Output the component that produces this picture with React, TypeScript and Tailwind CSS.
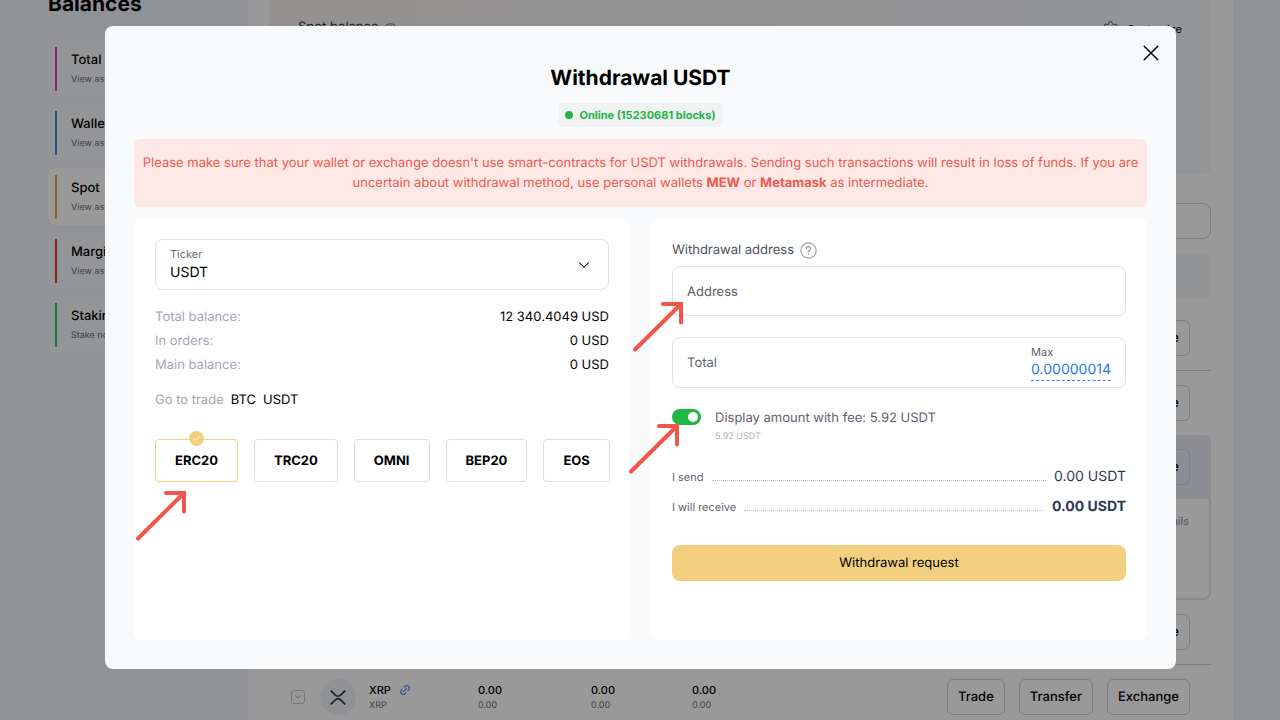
import { useState } from "react";
import { Check, ChevronDown, Eye, Link2, Settings } from "lucide-react";

const accounts = [
  { name: "Total", note: "View assets", stripe: "bg-[#e03ad0]" },
  { name: "Wallet", note: "View assets", stripe: "bg-[#2f8bef]" },
  { name: "Spot", note: "View assets", stripe: "bg-[#f59a45]" },
  { name: "Margin", note: "View assets", stripe: "bg-[#e5302f]" },
  { name: "Staking", note: "Stake now", stripe: "bg-[#1fc16b]" },
];

const networks = ["ERC20", "TRC20", "OMNI", "BEP20", "EOS"];

const balances = [
  { label: "Total balance:", value: "12 340.4049 USD" },
  { label: "In orders:", value: "0 USD" },
  { label: "Main balance:", value: "0 USD" },
];

function Arrow({ className }: { className: string }) {
  return (
    <svg
      aria-hidden="true"
      viewBox="0 0 50 50"
      className={`pointer-events-none absolute z-10 size-[50px] ${className}`}
      fill="none"
      stroke="#f2554a"
      strokeWidth="4"
      strokeLinecap="round"
      strokeLinejoin="miter"
    >
      <path d="M2 47.5 47 3" />
      <path d="M30 2H48V20.5" />
    </svg>
  );
}

function CoinRow({ symbol, tone }: { symbol: string; tone: "line" | "plain" | "active" }) {
  const cell =
    tone === "line"
      ? "h-[65px] border-b border-[#d2d2da] p-0"
      : tone === "active"
        ? "h-[64px] bg-[#eaecf4] p-0 first:rounded-tl-md last:rounded-tr-md"
        : "h-[64px] p-0";
  const action =
    "h-[36px] rounded-md border border-[#d0d0da] px-[10px] pt-[2px] text-[13px] font-medium text-black";
  return (
    <tr>
      <td className={`${cell} w-[209px]`}>
        <div className="flex items-center pl-[22px]">
          <span className="flex size-[14px] items-center justify-center rounded-[3px] border border-[#c5c5d6] text-[#8f8fa6]">
            <ChevronDown size={10} />
          </span>
          <span className="ml-[15px] flex size-[36px] items-center justify-center rounded-full bg-[#f0f2f9]">
            <svg viewBox="0 0 16 15" className="h-[15px] w-[16px]" fill="none" stroke="#23292f" strokeWidth="1.7">
              <path d="M.8.7 5.2 5a4 4 0 0 0 5.6 0L15.2.7" />
              <path d="M.8 14.3 5.2 10a4 4 0 0 1 5.6 0l4.4 4.3" />
            </svg>
          </span>
          <div className="ml-[13px] pt-[2px]">
            <div className="flex items-center gap-[8px] text-[11px] leading-4 font-medium text-black">
              {symbol}
              <Link2 size={12} className="-rotate-45 text-[#2672e0]" />
            </div>
            <div className="text-[9px] leading-4 text-[#70707c]">{symbol}</div>
          </div>
        </div>
      </td>
      {["w-[113px]", "w-[101px]", "w-[160px]"].map((width) => (
        <td key={width} className={`${cell} ${width}`}>
          <div className="pt-[2px] text-[11px] leading-4 font-medium text-black">0.00</div>
          <div className="text-[9px] leading-4 text-[#70707c]">0.00</div>
        </td>
      ))}
      <td className={cell}>
        <div className="flex justify-end gap-[14px] pr-[21px]">
          <button type="button" className={action}>Trade</button>
          <button type="button" className={action}>Transfer</button>
          <button type="button" className={action}>Exchange</button>
        </div>
      </td>
    </tr>
  );
}

function BalancesPage() {
  return (
    <div className="flex h-full overflow-hidden bg-[#f1f3f9]">
      <aside className="w-[248px] shrink-0 pl-[48px]">
        <h1 className="-mt-[10px] text-[21px] leading-[30px] font-bold text-black">Balances</h1>
        <ul className="mt-[20px] flex flex-col gap-[7px]">
          {accounts.map((a) => (
            <li key={a.name} className="flex h-[57px] items-center rounded-lg bg-[#f7f8fc] pl-[7px] nth-[3]:bg-white">
              <span className={`h-[44px] w-[2px] ${a.stripe}`} />
              <div className="ml-[14px] pt-[2px]">
                <div className="text-[13px] leading-5 font-medium text-black">{a.name}</div>
                <div className="text-[9px] leading-5 text-[#6c6c78]">{a.note}</div>
              </div>
            </li>
          ))}
        </ul>
      </aside>
      <main className="mr-[47px] grow bg-white pr-[22px] pl-[21px]">
        <section className="flex h-[174px] items-start justify-between rounded-b-lg bg-linear-to-r from-[#f6f1ef] to-[#f6f8fc] px-[29px] pt-[17px] text-[13px] leading-5">
          <h2 className="flex items-center gap-[5px] text-[#2f3444]">
            Spot balance
            <Eye size={13} className="text-[#70708c]" />
          </h2>
          <button type="button" className="flex items-center gap-[8px] text-[11px] text-black">
            <Settings size={17} strokeWidth={1.5} className="text-[#70708c]" />
            <span className="pt-[2px]">Customize</span>
          </button>
        </section>
        <input aria-label="Search" className="mt-[29px] block h-[36px] w-full rounded-lg border border-[#cfcfd8]" />
        <div className="mt-[14px] h-[45px] rounded-lg bg-[#f6f7fb]" />
        <table className="mt-[8px] w-full table-fixed border-separate border-spacing-0 text-left">
          <tbody>
            <CoinRow symbol="BTC" tone="line" />
            <CoinRow symbol="ETH" tone="plain" />
            <CoinRow symbol="USDT" tone="active" />
            <tr>
              <td colSpan={5} className="h-[101px] rounded-b-lg border-r-2 border-b-2 border-[#e4e4f0] p-0 pt-[12px] pr-[20px] text-right align-top text-[11px] leading-5 text-[#8f8f9f]">
                Details
              </td>
            </tr>
            <CoinRow symbol="LTC" tone="line" />
            <CoinRow symbol="XRP" tone="plain" />
          </tbody>
        </table>
      </main>
    </div>
  );
}

export default function App() {
  const [network, setNetwork] = useState("ERC20");
  const [withFee, setWithFee] = useState(true);

  return (
    <div className="relative h-screen overflow-hidden font-['Inter',sans-serif] [text-rendering:geometricPrecision] **:[text-rendering:inherit]">
      <BalancesPage />
      <div className="absolute inset-0 overflow-hidden bg-black/40 pt-[26px] pr-[104px] pl-[105px]">
        <div
          role="dialog"
          aria-modal="true"
          aria-labelledby="dialog-title"
          className="relative rounded-lg bg-[#f9fafc] px-[29px] pt-[39px] pb-[29px]"
        >
          <button type="button" aria-label="Close" className="absolute top-[19px] right-[17px] text-black">
            <svg viewBox="0 0 16 16" className="size-[16px]" fill="none" stroke="currentColor" strokeWidth="1.4" strokeLinecap="round">
              <path d="M1.2 1.2 14.8 14.8M14.8 1.2 1.2 14.8" />
            </svg>
          </button>
          <h2 id="dialog-title" className="text-center text-[21px] leading-[28px] font-bold text-black">
            Withdrawal USDT
          </h2>
          <div className="mt-[10px] flex justify-center">
            <span className="flex h-[24px] items-center gap-[6px] rounded bg-[#f1f2f4] px-[7px] text-[11px] font-bold text-[#22b544]">
              <span className="size-[8px] rounded-full bg-[#22b544]" />
              Online (15230681 blocks)
            </span>
          </div>
          <p className="mt-[12px] rounded-md bg-[#fee8e6] px-[7px] py-[14px] text-center text-[13px] leading-[20px] text-[#f0594e]">
            Please make sure that your wallet or exchange doesn't use smart-contracts for USDT withdrawals. Sending such
            transactions will result in loss of funds. If you are uncertain about withdrawal method, use personal wallets{" "}
            <b>MEW</b> or <b>Metamask</b> as intermediate.
          </p>
          <div className="mt-[11px] grid grid-cols-2 gap-[21px]">
            <section className="relative rounded-lg bg-white p-[21px]">
              <div className="relative h-[51px] rounded-lg border border-[#dfe1e4]">
                <label htmlFor="ticker" className="pointer-events-none absolute top-[6px] left-[14px] text-[11px] leading-4 text-[#6d6d7a]">
                  Ticker
                </label>
                <select id="ticker" className="h-full w-full appearance-none rounded-lg bg-transparent pt-[16px] pl-[14px] text-[14px] text-black">
                  <option>USDT</option>
                </select>
                <ChevronDown size={18} strokeWidth={1.4} className="pointer-events-none absolute top-[16px] right-[15px] text-black" />
              </div>
              <dl className="mt-[15px] text-[13px] leading-[24px]">
                {balances.map((b) => (
                  <div key={b.label} className="flex justify-between">
                    <dt className="text-[#a5a5b3]">{b.label}</dt>
                    <dd className="text-black">{b.value}</dd>
                  </div>
                ))}
              </dl>
              <div className="mt-[13px] flex gap-[7px] text-[13px] leading-[20px] text-black">
                <span className="text-[#a5a5b3]">Go to trade</span>
                <a href="#btc">BTC</a>
                <a href="#usdt">USDT</a>
              </div>
              <div className="mt-[29px] flex gap-[16px]">
                {networks.map((n) => (
                  <button
                    key={n}
                    type="button"
                    aria-pressed={network === n}
                    onClick={() => setNetwork(n)}
                    className={`relative h-[43px] rounded border px-[19px] pt-[2px] text-[13px] font-bold text-black ${
                      network === n ? "border-[#f2d080]" : "border-[#dcdee2]"
                    }`}
                  >
                    {n}
                    {network === n && (
                      <span className="absolute inset-x-0 -top-[9px] flex justify-center">
                        <span className="flex size-[15px] items-center justify-center rounded-full bg-[#f2d080] text-white">
                          <Check size={9} strokeWidth={2.4} />
                        </span>
                      </span>
                    )}
                  </button>
                ))}
              </div>
              <Arrow className="top-[273px] left-[2px]" />
            </section>
            <section className="relative rounded-lg bg-white px-[21px] pt-[21px] pb-[59px]">
              <div className="flex h-[23px] items-center gap-[6px] text-[13px] text-[#4d5260]">
                <label htmlFor="address">Withdrawal address</label>
                <svg viewBox="0 0 17 17" className="size-[17px]" fill="none" stroke="#a29fb6" strokeWidth="1.2" strokeLinecap="round">
                  <circle cx="8.5" cy="8.5" r="7.7" />
                  <path d="M6.5 6.6a2 2 0 1 1 3 1.8c-.7.4-1 .8-1 1.5M8.5 12v.1" strokeWidth="1.4" />
                </svg>
              </div>
              <input
                id="address"
                placeholder="Address"
                className="mt-[4px] block h-[50px] w-full rounded-lg border border-[#dfe1e6] px-[14px] pt-[2px] text-[13px] placeholder:text-[#5c5c5f]"
              />
              <div className="mt-[21px] flex h-[51px] items-center rounded-lg border border-[#dfe1e6] px-[14px]">
                <input aria-label="Total" placeholder="Total" className="min-w-0 grow pt-[2px] text-[13px] placeholder:text-[#62626c]" />
                <button type="button" className="text-left">
                  <span className="block text-[11px] leading-[15px] text-[#5f5f6b]">Max</span>
                  <span className="block border-b border-dashed border-[#2f7dee] text-[14px] leading-[20px] text-[#1f78ee]">
                    0.00000014
                  </span>
                </button>
              </div>
              <label className="mt-[20px] flex cursor-pointer gap-[14px]">
                <input
                  type="checkbox"
                  checked={withFee}
                  onChange={() => setWithFee(!withFee)}
                  className="mt-px h-[16px] w-[29px] shrink-0 appearance-none rounded-full bg-[#c9ccd3] p-[3px] before:block before:size-[10px] before:rounded-full before:bg-white checked:bg-[#22b544] checked:before:ml-auto"
                />
                <span>
                  <span className="block text-[13px] leading-[20px] text-[#62626e]">Display amount with fee: 5.92 USDT</span>
                  <span className="block text-[9px] leading-[18px] text-[#b0b4bc]">5.92 USDT</span>
                </span>
              </label>
              <dl className="mt-[15px] text-[#2e3850]">
                <div className="flex h-[30px] items-center gap-[8px]">
                  <dt className="pt-[3px] text-[11px] text-[#5f5f6b]">I send</dt>
                  <span className="mt-[9px] grow border-b border-dotted border-[#bcbcbc]" />
                  <dd className="text-[14px]">0.00 USDT</dd>
                </div>
                <div className="flex h-[30px] items-center gap-[8px]">
                  <dt className="pt-[3px] text-[11px] text-[#5f5f6b]">I will receive</dt>
                  <span className="mt-[9px] grow border-b border-dotted border-[#bcbcbc]" />
                  <dd className="text-[14px] font-bold">0.00 USDT</dd>
                </div>
              </dl>
              <button type="button" className="mt-[24px] h-[36px] w-full rounded-lg bg-[#f2d080] pt-[2px] text-[13px] text-black">
                Withdrawal request
              </button>
              <Arrow className="top-[84px] -left-[18px]" />
              <Arrow className="top-[206px] -left-[22px]" />
            </section>
          </div>
        </div>
      </div>
    </div>
  );
}
